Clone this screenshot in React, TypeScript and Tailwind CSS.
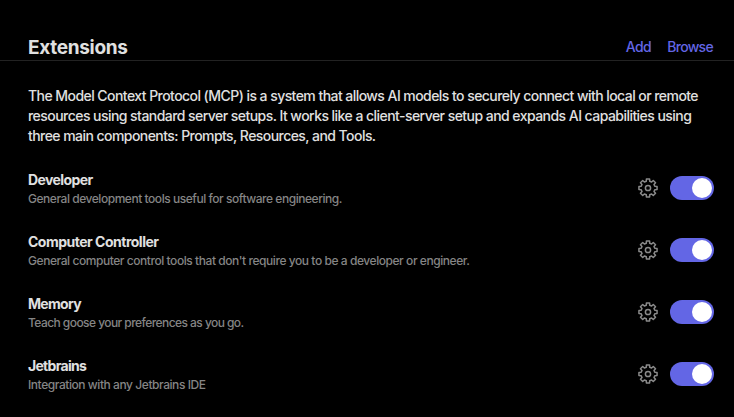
const items = [
  { name: 'Developer', text: 'General development tools useful for software engineering.', nameTracking: 'tracking-[-0.6px]', textTracking: 'tracking-[-0.46px]' },
  { name: 'Computer Controller', text: "General computer control tools that don't require you to be a developer or engineer.", nameTracking: 'tracking-[-0.5px]', textTracking: 'tracking-[-0.44px]' },
  { name: 'Memory', text: 'Teach goose your preferences as you go.', nameTracking: 'tracking-[-0.7px]', textTracking: 'tracking-[-0.56px]' },
  { name: 'Jetbrains', text: 'Integration with any Jetbrains IDE', nameTracking: 'tracking-[-0.7px]', textTracking: 'tracking-[-0.44px]' },
];

const teeth = 8;
const point = (radius: number, degrees: number) => {
  const a = (degrees * Math.PI) / 180;
  return `${(10 + radius * Math.sin(a)).toFixed(2)} ${(10 - radius * Math.cos(a)).toFixed(2)}`;
};
const gearPath =
  Array.from({ length: teeth }, (_, i) => {
    const c = (i * 360) / teeth;
    return `${i ? 'L' : 'M'}${point(7, c - 14)}L${point(9.2, c - 10)}L${point(9.2, c + 10)}L${point(7, c + 14)}`;
  }).join('') + 'Z';

function Gear() {
  return (
    <svg width="20" height="20" viewBox="0 0 20 20" fill="none" stroke="#8a8a8a" strokeWidth="1.5" strokeLinejoin="round">
      <path d={gearPath} />
      <circle cx="10" cy="10" r="2.6" />
    </svg>
  );
}

export default function App() {
  return (
    <main className="h-[417px] w-[734px] overflow-hidden bg-black font-['Inter',sans-serif] text-[#e0e0e0]">
      <header className="flex h-[61px] items-end justify-between border-b border-[#222] pr-5 pb-[3px] pl-7">
        <h1 className="text-[19px] leading-[19px] font-bold tracking-[-0.3px]">Extensions</h1>
        <div className="flex gap-4 text-sm leading-5 font-medium text-[#6366e5]">
          <button className="tracking-[-0.5px]">Add</button>
          <button className="pr-px tracking-[-0.7px]">Browse</button>
        </div>
      </header>
      <p className="mt-[25px] ml-7 text-sm leading-5 font-medium whitespace-nowrap">
        <span className="tracking-[-0.555px]">The Model Context Protocol (MCP) is a system that allows AI models to securely connect with local or remote</span>
        <br />
        <span className="tracking-[-0.545px]">resources using standard server setups. It works like a client-server setup and expands AI capabilities using</span>
        <br />
        <span className="tracking-[-0.555px]">three main components: Prompts, Resources, and Tools.</span>
      </p>
      <div className="mt-6 pr-5 pl-7">
        {items.map((item) => (
          <div key={item.name} className="flex h-[62px] items-start justify-between">
            <div>
              <h2 className={`text-sm leading-5 font-bold ${item.nameTracking}`}>{item.name}</h2>
              <p className={`mt-px text-xs leading-4 font-medium text-[#858585] ${item.textTracking}`}>{item.text}</p>
            </div>
            <div className="mt-1.5 flex items-center gap-3">
              <Gear />
              <div className="flex h-6 w-11 items-center justify-end rounded-full bg-[#6366e5] p-0.5">
                <span className="size-5 rounded-full bg-white" />
              </div>
            </div>
          </div>
        ))}
      </div>
    </main>
  );
}
